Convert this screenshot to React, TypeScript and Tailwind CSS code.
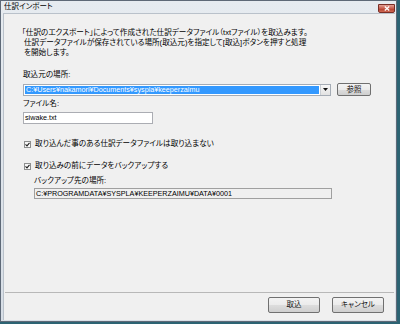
import React from 'react';

function CheckBox() {
  return <span className="w-[7px] h-[7px] border border-[#8e8f8f] bg-gradient-to-br from-[#f4f4f4] to-white flex items-center justify-center shrink-0">
      <svg width="5" height="5" viewBox="0 0 5 5">
        <path d="M0.5 2.4 L2 3.9 L4.5 0.8" stroke="#1e1e1e" strokeWidth="1.1" fill="none" />
      </svg>
    </span>;
}

function WinButton({ label, className }: { label: string; className: string }) {
  return <div className={`flex items-center justify-center border border-[#707070] rounded-[2px] bg-[linear-gradient(#f3f3f3_0%,#ebebeb_50%,#dddddd_51%,#cfcfcf_100%)] text-[7.5px] leading-none text-[#111] ${className}`}>
      {label}
    </div>;
}

export default function App() {
  return <div className="w-[400px] h-[324px] bg-[#2c6373] overflow-hidden font-['Liberation_Sans','Noto_Sans_CJK_JP',sans-serif] [font-feature-settings:'palt'] text-black">
      <div className="w-[397px] h-[322px] border border-[#5e6977] bg-[linear-gradient(#e6ebf0,#d7dee6)] pl-[2px] pr-[1px] pb-[1px] flex flex-col">
        {/* title bar */}
        <div className="h-[12px] flex items-start justify-between">
          <span className="text-[7.5px] leading-[12px] pl-[1px]">仕訳インポート</span>
          <div className="mt-[3px] w-[17px] h-[9px] rounded-b-[2px] border border-[#7a2e26] bg-[linear-gradient(#e3a196,#c75a4a_50%,#b23c2b_51%,#d06a55)] flex items-center justify-center">
            <svg width="6" height="5" viewBox="0 0 6 5">
              <path d="M0.8 0.5 L5.2 4.5 M5.2 0.5 L0.8 4.5" stroke="white" strokeWidth="1.3" />
            </svg>
          </div>
        </div>

        {/* client area */}
        <div className="flex-1 bg-[#f0f0f0] border-t border-l border-[#b9c1ca] flex flex-col text-[7.6px]">
          <div className="mt-[14px] pl-[20px] leading-[10px] whitespace-nowrap">
            <div className="-ml-[2px]">「仕訳のエクスポート」によって作成された仕訳データファイル（txtファイル）を取込みます。</div>
            <div>仕訳データファイルが保存されている場所(取込元)を指定して[取込]ボタンを押すと処理</div>
            <div>を開始します。</div>
          </div>

          <div className="mt-[12px] pl-[19px] leading-[10px]">取込元の場所:</div>
          <div className="mt-[3px] pl-[19px] flex items-center gap-[6px]">
            <div className="w-[308px] h-[12px] border border-[#a5acb5] bg-white flex items-stretch">
              <div className="flex-1 m-[1px] bg-[#3399ff] text-white text-[7.2px] leading-[8px] pl-[1px] whitespace-nowrap overflow-hidden">
                C:¥Users¥nakamori¥Documents¥syspla¥keeperzaimu
              </div>
              <div className="w-[10px] border-l border-[#c9ced4] bg-[linear-gradient(#f7f7f7,#e2e2e2)] flex items-center justify-center">
                <svg width="5" height="3" viewBox="0 0 5 3">
                  <path d="M0 0 L5 0 L2.5 3 Z" fill="#111" />
                </svg>
              </div>
            </div>
            <WinButton label="参照" className="w-[34px] h-[13px]" />
          </div>

          <div className="mt-[3px] pl-[19px] leading-[10px]">ファイル名:</div>
          <div className="mt-[3px] pl-[19px]">
            <div className="w-[130px] h-[12px] border border-[#abadb3] bg-white text-[7.2px] leading-[10px] pl-[1px]">siwake.txt</div>
          </div>

          <div className="mt-[15px] pl-[20px] flex items-center gap-[4px] leading-[10px]">
            <CheckBox />
            <span>取り込んだ事のある仕訳データファイルは取り込まない</span>
          </div>
          <div className="mt-[12px] pl-[20px] flex items-center gap-[4px] leading-[10px]">
            <CheckBox />
            <span>取り込みの前にデータをバックアップする</span>
          </div>
          <div className="mt-[5px] pl-[30px] leading-[10px]">バックアップ先の場所:</div>
          <div className="mt-[2px] pl-[30px]">
            <div className="w-[298px] h-[11px] border border-[#a0a0a0] bg-[#f0f0f0] text-[7.2px] leading-[9px] pl-[1px] whitespace-nowrap">
              C:¥PROGRAMDATA¥SYSPLA¥KEEPERZAIMU¥DATA¥0001
            </div>
          </div>

          <div className="flex-1" />
          <div className="mx-[1px] h-px bg-[#b8b8b8]" />
          <div className="mt-[4px] mb-[7px] flex justify-end gap-[12px] pr-[11px]">
            <WinButton label="取込" className="w-[52px] h-[16px]" />
            <WinButton label="キャンセル" className="w-[52px] h-[16px]" />
          </div>
        </div>
      </div>
    </div>;
}
